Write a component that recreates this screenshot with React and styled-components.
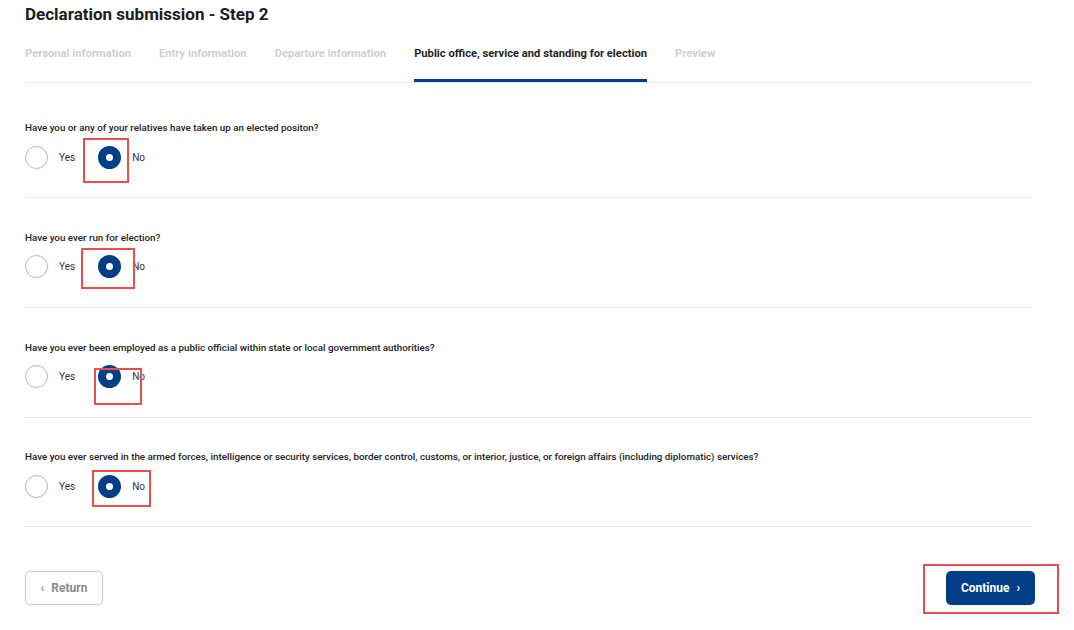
import React from 'react';
import styled, { createGlobalStyle } from 'styled-components';

const GlobalStyle = createGlobalStyle`
  html, body {
    margin: 0;
    background: #ffffff;
    font-family: Roboto, "Liberation Sans", Arial, sans-serif;
    color: #1f1f1f;
  }
`;

const Page = styled.div`
  padding: 4px 42px 26px 25px;
  width: 1007px;
  min-height: 600px;
`;

const Title = styled.h1`
  margin: 0;
  font-size: 17px;
  line-height: 20px;
  font-weight: 700;
  color: #1c1c1c;
`;

const Tabs = styled.div`
  display: flex;
  gap: 28px;
  margin-top: 23px;
  border-bottom: 1px solid #e6e6e6;
`;

const Tab = styled.div`
  font-size: 11.2px;
  line-height: 14px;
  font-weight: 700;
  padding-bottom: 18px;
  color: ${(p) => (p.$active ? '#1f1f1f' : '#cfcfcf')};
  border-bottom: 3px solid ${(p) => (p.$active ? '#003f88' : 'transparent')};
`;

const Questions = styled.div`
  margin-top: 6.4px;
`;

const Block = styled.div`
  padding: 32.6px 0 28px;
  border-bottom: 1px solid #e6e6e6;

  &:first-child {
    padding-top: 32px;
  }
`;

const Question = styled.div`
  font-size: 9.8px;
  line-height: 14px;
  font-weight: 500;
  color: #222222;
`;

const Options = styled.div`
  position: relative;
  display: flex;
  align-items: center;
  gap: 23px;
  height: 24px;
  margin-top: 10px;
`;

const Option = styled.label`
  display: flex;
  align-items: center;
  gap: 11px;
  font-size: 10px;
  color: #333333;
`;

const Circle = styled.span`
  box-sizing: border-box;
  width: 23px;
  height: 23px;
  border-radius: 50%;
  border: ${(p) => (p.$checked ? '8.5px solid #003f88' : '1px solid #b5b5b5')};
  background: #ffffff;
`;

const Highlight = styled.div`
  position: absolute;
  left: ${(p) => p.$left}px;
  top: ${(p) => p.$top}px;
  width: ${(p) => p.$w}px;
  height: ${(p) => p.$h}px;
  box-sizing: border-box;
  border: 2px solid #e8504f;
  pointer-events: none;
`;

const Footer = styled.div`
  display: flex;
  justify-content: space-between;
  align-items: center;
  margin-top: 44px;
  margin-right: -3px;
`;

const ReturnButton = styled.button`
  box-sizing: border-box;
  height: 34px;
  width: 78px;
  border: 1px solid #c9c9c9;
  border-radius: 5px;
  background: #ffffff;
  color: #8a8a8a;
  font-family: inherit;
  font-size: 12px;
  font-weight: 700;
  display: flex;
  align-items: center;
  justify-content: center;
  gap: 7px;
`;

const ContinueWrap = styled.div`
  position: relative;
`;

const ContinueButton = styled.button`
  height: 34px;
  width: 89px;
  border: none;
  border-radius: 5px;
  background: #003f88;
  color: #ffffff;
  font-family: inherit;
  font-size: 12px;
  font-weight: 700;
  display: flex;
  align-items: center;
  justify-content: center;
  gap: 7px;
`;

const Chevron = styled.span`
  font-size: 12px;
  font-weight: 700;
`;

const tabs = [
  'Personal information',
  'Entry information',
  'Departure information',
  'Public office, service and standing for election',
  'Preview',
];

const questions = [
  { text: 'Have you or any of your relatives have taken up an elected positon?', box: [58, -7, 46, 45] },
  { text: 'Have you ever run for election?', box: [56, -7, 54, 41] },
  { text: 'Have you ever been employed as a public official within state or local government authorities?', box: [69, 3, 48, 37] },
  {
    text: 'Have you ever served in the armed forces, intelligence or security services, border control, customs, or interior, justice, or foreign affairs (including diplomatic) services?',
    box: [67, -4, 59, 37],
  },
];

export default function App() {
  return (
    <>
      <GlobalStyle />
      <Page>
        <Title>Declaration submission - Step 2</Title>
        <Tabs>
          {tabs.map((t, i) => (
            <Tab key={t} $active={i === 3}>
              {t}
            </Tab>
          ))}
        </Tabs>
        <Questions>
          {questions.map((q) => (
            <Block key={q.text}>
              <Question>{q.text}</Question>
              <Options>
                <Option>
                  <Circle />
                  Yes
                </Option>
                <Option>
                  <Circle $checked />
                  No
                </Option>
                <Highlight $left={q.box[0]} $top={q.box[1]} $w={q.box[2]} $h={q.box[3]} />
              </Options>
            </Block>
          ))}
        </Questions>
        <Footer>
          <ReturnButton>
            <Chevron>‹</Chevron>
            Return
          </ReturnButton>
          <ContinueWrap>
            <ContinueButton>
              Continue
              <Chevron>›</Chevron>
            </ContinueButton>
            <Highlight $left={-23} $top={-7} $w={136} $h={50} />
          </ContinueWrap>
        </Footer>
      </Page>
    </>
  );
}
